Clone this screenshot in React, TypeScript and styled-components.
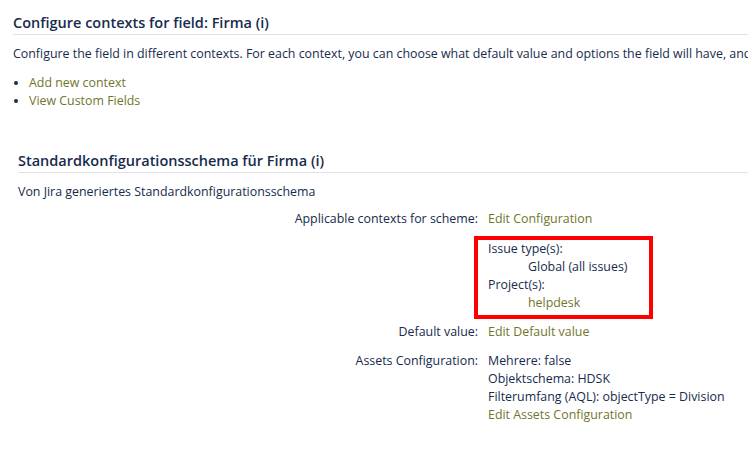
import React from "react"
import styled, { createGlobalStyle } from "styled-components"

const GlobalStyle = createGlobalStyle`
    body {
        margin: 0;
        background: #fff;
        font-family: "Open Sans", "Noto Sans", sans-serif;
        font-size: 12.4px;
        color: #172b4d;
    }
`

const Page = styled.div`
    width: 748px;
    height: 455px;
    overflow: hidden;
    padding: 12px 0 0 13px;
    box-sizing: border-box;
`

const Heading = styled.h2`
    margin: 0;
    padding: 1px 0 1px;
    border-bottom: 1px solid #dfe1e6;
    font-size: 14.5px;
    font-weight: 600;
    line-height: 20px;
    white-space: nowrap;
`

const Text = styled.p`
    margin: 10px 0 0;
    line-height: 18px;
    white-space: nowrap;
`

const Links = styled.ul`
    margin: 11px 0 0;
    padding-left: 16px;
    line-height: 18px;
`

const Link = styled.a`
    color: #72752c;
    text-decoration: none;
`

const Scheme = styled.section`
    margin: 40px 0 0 5px;
`

const ConfigTable = styled.table`
    margin-top: 9px;
    border-collapse: collapse;
    line-height: 18px;
`

const Label = styled.th`
    width: 460px;
    padding: 0 10px 11px 0;
    font-weight: 400;
    text-align: right;
    vertical-align: top;
    white-space: nowrap;
`

const Value = styled.td`
    padding: 0 0 11px;
    vertical-align: top;
    white-space: nowrap;
`

const ContextBox = styled.div`
    margin: 8px 0 -7px -14px;
    width: 161px;
    padding: 0 0 3px 10px;
    border: 4px solid #ff0000;
`

const Indented = styled.div`
    padding-left: 40px;
`

export default function App() {
    return (
        <>
            <GlobalStyle />
            <Page>
                <Heading>Configure contexts for field: Firma (i)</Heading>
                <Text>
                    Configure the field in different contexts. For each context, you can choose what default value and
                    options the field will have, and which projects and issue types it applies to.
                </Text>
                <Links>
                    <li>
                        <Link href="#">Add new context</Link>
                    </li>
                    <li>
                        <Link href="#">View Custom Fields</Link>
                    </li>
                </Links>
                <Scheme>
                    <Heading>Standardkonfigurationsschema für Firma (i)</Heading>
                    <Text>Von Jira generiertes Standardkonfigurationsschema</Text>
                    <ConfigTable>
                        <tbody>
                            <tr>
                                <Label>Applicable contexts for scheme:</Label>
                                <Value>
                                    <Link href="#">Edit Configuration</Link>
                                    <ContextBox>
                                        <div>Issue type(s):</div>
                                        <Indented>Global (all issues)</Indented>
                                        <div>Project(s):</div>
                                        <Indented>
                                            <Link href="#">helpdesk</Link>
                                        </Indented>
                                    </ContextBox>
                                </Value>
                            </tr>
                            <tr>
                                <Label>Default value:</Label>
                                <Value>
                                    <Link href="#">Edit Default value</Link>
                                </Value>
                            </tr>
                            <tr>
                                <Label>Assets Configuration:</Label>
                                <Value>
                                    <div>Mehrere: false</div>
                                    <div>Objektschema: HDSK</div>
                                    <div>Filterumfang (AQL): objectType = Division</div>
                                    <Link href="#">Edit Assets Configuration</Link>
                                </Value>
                            </tr>
                        </tbody>
                    </ConfigTable>
                </Scheme>
            </Page>
        </>
    )
}
